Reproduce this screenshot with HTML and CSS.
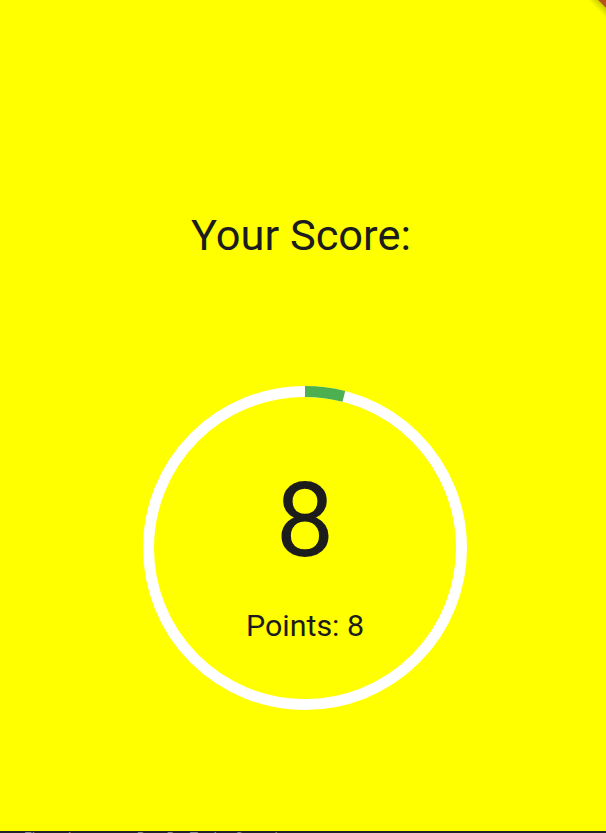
FILE: index.html
```html
<!DOCTYPE html>
<html>
<head>
<meta charset="utf-8">
<link rel="stylesheet" href="styles.css">
</head>
<body>
<div class="screen">
  <main class="page">
    <h1 class="title">Your Score:</h1>
    <div class="ring">
      <svg class="ring-svg" width="324" height="324" viewBox="0 0 324 324">
        <circle cx="162" cy="162" r="156.5" fill="none" stroke="#ffffff" stroke-width="11"/>
        <circle cx="162" cy="162" r="156.5" fill="none" stroke="#4caf50" stroke-width="11" stroke-dasharray="39.3 1000" transform="rotate(-90 162 162)"/>
      </svg>
      <div class="score">8</div>
      <div class="points">Points: 8</div>
    </div>
    <div class="corner"></div>
  </main>
  <div class="bottom-bar"><span>Flutter Inspector &nbsp; Dart DevTools &nbsp; Console</span></div>
</div>
</body>
</html>
```
FILE: styles.css
```css
html, body {
  margin: 0;
  padding: 0;
  overflow: hidden;
}
body {
  font-family: Roboto, "Noto Sans", sans-serif;
  color: #1c1c1c;
}
.screen {
  width: 606px;
  height: 833px;
  display: flex;
  flex-direction: column;
}
.page {
  position: relative;
  height: 831px;
  background: #ffff00;
  display: flex;
  flex-direction: column;
  align-items: center;
  padding-top: 210px;
  box-sizing: border-box;
  overflow: hidden;
}
.title {
  margin: 0 4px 0 0;
  font-size: 43.4px;
  font-weight: 400;
  line-height: normal;
}
.ring {
  position: relative;
  margin-top: 125px;
  margin-left: 4px;
  width: 324px;
  height: 324px;
  display: flex;
  flex-direction: column;
  align-items: center;
  padding-top: 74px;
  box-sizing: border-box;
}
.ring-svg {
  position: absolute;
  left: 0;
  top: 0;
}
.score {
  position: relative;
  font-size: 104px;
  line-height: normal;
}
.points {
  position: relative;
  margin-top: 27px;
  font-size: 30.4px;
  line-height: normal;
}
.corner {
  position: absolute;
  top: 0;
  right: 0;
  width: 24px;
  height: 24px;
  background: linear-gradient(225deg, #b4541c 0, #b4541c 5px, rgba(120, 120, 0, 0.35) 6px, rgba(255, 255, 0, 0) 13px);
}
.bottom-bar {
  height: 2px;
  background: #222428;
  overflow: hidden;
  position: relative;
}
.bottom-bar span {
  position: absolute;
  left: 24px;
  top: 0;
  font-size: 14px;
  line-height: 14px;
  color: #8a8d92;
  white-space: nowrap;
}
```
